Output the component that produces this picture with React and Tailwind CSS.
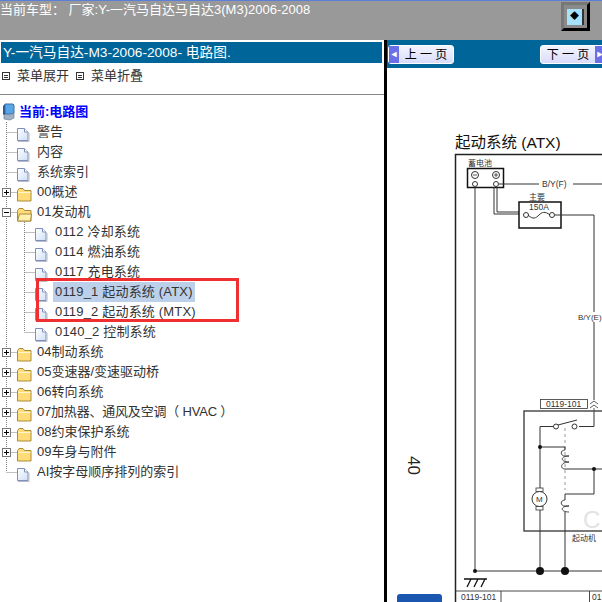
import React from "react";

const FONT = "font-['Liberation_Sans','Noto_Sans_CJK_SC',sans-serif]";

const tree = [
  { label: "警告", type: "doc" },
  { label: "内容", type: "doc" },
  { label: "系统索引", type: "doc" },
  { label: "00概述", type: "folder", box: "plus" },
  { label: "01发动机", type: "open", box: "minus" },
  { label: "0112 冷却系统", type: "doc", sub: true },
  { label: "0114 燃油系统", type: "doc", sub: true },
  { label: "0117 充电系统", type: "doc", sub: true },
  { label: "0119_1 起动系统 (ATX)", type: "doc", sub: true, selected: true },
  { label: "0119_2 起动系统 (MTX)", type: "doc", sub: true },
  { label: "0140_2 控制系统", type: "doc", sub: true, last: true },
  { label: "04制动系统", type: "folder", box: "plus" },
  { label: "05变速器/变速驱动桥", type: "folder", box: "plus" },
  { label: "06转向系统", type: "folder", box: "plus" },
  { label: "07加热器、通风及空调（ HVAC ）", type: "folder", box: "plus", tight: true },
  { label: "08约束保护系统", type: "folder", box: "plus" },
  { label: "09车身与附件", type: "folder", box: "plus" },
  { label: "AI按字母顺序排列的索引", type: "doc", end: true },
];

const Gutter = ({ width = 17, x = 6.5, branch, end, box }) => (
  <svg width={width} height="20" className="shrink-0" stroke="#808080" strokeDasharray="1 1" fill="none">
    <path d={`M${x} 0V${end ? 10 : 20}`} />
    {branch && <path d={`M${x} 10.5H${width}`} />}
    {box && (
      <g strokeDasharray="none">
        <rect x="2.500" y="6.500" width="8" height="8" fill="#fff" stroke="#777" />
        <path d="M4 10.500h5" stroke="#000" />
        {box === "plus" && <path d="M6.500 8v5" stroke="#000" />}
      </g>
    )}
  </svg>
);

const DocIcon = () => (
  <svg width="14" height="20" viewBox="0 0 14 20" className="shrink-0">
    <defs>
      <linearGradient id="docFill" x1="0" y1="0" x2="1" y2="1">
        <stop offset="0" stopColor="#ffffff" />
        <stop offset="1" stopColor="#cfe0f7" />
      </linearGradient>
    </defs>
    <path d="M0.500 6.500h7l3.500 3.500v8.500h-10.500z" fill="url(#docFill)" stroke="#7d90bd" />
    <path d="M7.500 6.500v3.500h3.500" fill="#fff" stroke="#7d90bd" />
    <path d="M1 19.500h11V11" fill="none" stroke="#b9bcc4" />
  </svg>
);

const FolderIcon = ({ open }) => (
  <svg width="16" height="20" viewBox="0 0 16 20" className="shrink-0">
    <path d="M0.500 8.500l1.500-2h4l1.500 2h6.500v10.500h-13.500z" fill="#ffdc78" stroke="#a98c3a" />
    {open ? (
      <path d="M0.500 19l2-7h12l-1 7z" fill="#fff0b0" stroke="#a98c3a" />
    ) : (
      <path d="M1.500 10.500h12" stroke="#fff6cf" />
    )}
  </svg>
);

const TreeRow = ({ item }) => (
  <div className="flex h-5 items-center">
    <Gutter branch={!item.sub} end={item.end} box={item.box} />
    {item.sub && <Gutter width={18} x={7.5} branch end={item.last} />}
    {item.type === "doc" ? <DocIcon /> : <FolderIcon open={item.type === "open"} />}
    <span
      className={`px-[2px] leading-5 whitespace-nowrap text-[13px] text-[#333] ${
        item.selected ? "bg-[#bdd0ea]" : ""
      } ${item.type === "doc" ? "ml-[4px]" : "ml-[2px]"} ${item.sub ? "tracking-[0.18px]" : ""} ${
        item.tight ? "tracking-[-0.2px]" : ""
      }`}
    >
      {item.label}
    </span>
  </div>
);

const MenuGlyph = () => (
  <span className="flex h-[8px] w-[8px] flex-col justify-center gap-px border border-[#333] px-px">
    <span className="h-px bg-[#333]" />
    <span className="h-px bg-[#333]" />
  </span>
);

const PageButton = ({ label, next }) => (
  <div
    className={`flex h-[19px] w-[66px] items-center rounded-[3px] border border-white bg-gradient-to-b from-[#f4f4ff] to-[#d9dcfa] text-[12px] text-black ${
      next ? "flex-row-reverse" : ""
    }`}
  >
    <span className="flex h-full w-[10px] items-center justify-center bg-[#6a6fe8] text-[9px] text-white">
      {next ? "►" : "◄"}
    </span>
    <span className="flex-1 text-center whitespace-pre">{label}</span>
  </div>
);

const Diagram = () => (
  <svg viewBox="387 68 215 534" width="215" height="534" fill="none" className="block" stroke="#333" fontFamily="'Liberation Sans','Noto Sans CJK SC',sans-serif">
    <text x="455" y="148" fontSize="15.500" fill="#111" stroke="none">起动系统 (ATX)</text>
    <text x="0" y="0" fontSize="17" fill="#222" stroke="none" transform="translate(408 456) rotate(90)">40</text>
    <rect x="397" y="594" width="45" height="12" rx="3" fill="#1b56b0" stroke="none" />

    <path d="M455.500 602V154.500H602" stroke="#222" strokeWidth="1.500" />
    <text x="468" y="166" fontSize="8" fill="#333" stroke="none">蓄电池</text>
    <rect x="467.500" y="168.500" width="36" height="19" stroke="#111" strokeWidth="1.500" />
    <circle cx="475" cy="175" r="3.500" />
    <circle cx="496" cy="175" r="3.500" />
    <path d="M473 175h4M494 175h4M496 173v4" strokeWidth="0.800" />
    <circle cx="475" cy="184" r="2.500" fill="#fff" />
    <circle cx="496" cy="184" r="2.500" fill="#fff" />
    <path d="M499 184h40M573 184h29" />
    <text x="542" y="187" fontSize="8.500" fill="#333" stroke="none">B/Y(F)</text>
    <path d="M475 187V571" />
    <path d="M494 187v27h25M497 187v25h22" />
    <rect x="519" y="202" width="42" height="26" stroke="#111" strokeWidth="1.500" />
    <text x="529" y="200" fontSize="8" fill="#333" stroke="none">主要</text>
    <text x="529" y="210" fontSize="8.500" fill="#333" stroke="none">150A</text>
    <circle cx="526" cy="215" r="2.500" />
    <circle cx="552" cy="215" r="2.500" />
    <path d="M528 215c5 5 8 3 11 0s6-4 11 0M555 215h39V312M594 322V400" />
    <text x="578" y="320" fontSize="8" fill="#333" stroke="none">B/Y(E)</text>

    <rect x="540.500" y="399.500" width="47" height="9" strokeWidth="0.800" />
    <text x="546" y="407" fontSize="8.500" fill="#333" stroke="none">0119-101</text>
    <path d="M590 404l4-3 4 3M590 408l4-3 4 3M594 408v4" strokeWidth="0.800" />
    <rect x="524" y="411" width="90" height="120" stroke="#333" strokeWidth="1.300" />
    <path d="M540 571V426.500h14M558 425l19-5M579 426.500h15V412" />
    <circle cx="556" cy="426.500" r="2.500" fill="#fff" />
    <circle cx="574.500" cy="426.500" r="2.500" fill="#fff" />
    <path d="M565 428V490" strokeDasharray="3 3" stroke="#999" />
    <path d="M540 447h25v3M565 469h37M594 469v25h-29v6M565 512v59" />
    <path d="M565 450c-5 0-5 6 0 6h4M569 456c-9 0-9 6 0 6M569 462c-9 0-9 7-4 7" strokeWidth="0.900" />
    <path d="M565 500c-5 0-5 6 0 6h4M569 506c-9 0-9 6 0 6" strokeWidth="0.900" />
    <circle cx="539.500" cy="499" r="7.500" fill="#fff" />
    <rect x="536" y="488" width="7" height="3.500" fill="#fff" strokeWidth="0.800" />
    <rect x="536" y="506.500" width="7" height="3.500" fill="#fff" strokeWidth="0.800" />
    <text x="536" y="502" fontSize="8" fill="#333" stroke="none">M</text>
    <circle cx="540" cy="447" r="2" fill="#111" stroke="none" />
    <circle cx="594" cy="469" r="2" fill="#111" stroke="none" />
    <text x="583" y="528" fontSize="24" fill="#e3e3e3" stroke="none">C</text>
    <text x="572" y="541" fontSize="8" fill="#333" stroke="none">起动机</text>

    <path d="M475 571h127" />
    <circle cx="475" cy="571" r="2" fill="#111" stroke="none" />
    <circle cx="540" cy="571" r="4" fill="#111" stroke="none" />
    <circle cx="565" cy="571" r="4" fill="#111" stroke="none" />
    <path d="M464 579h23M467 587l4-8M474 587l4-8M481 587l4-8" strokeWidth="1.300" stroke="#111" />
    <path d="M455 591h147M501 591v11M589.500 591v11" strokeWidth="0.900" />
    <text x="461" y="599.500" fontSize="8.500" fill="#333" stroke="none">0119-101</text>
    <text x="592" y="599.500" fontSize="8.500" fill="#333" stroke="none">01</text>
  </svg>
);

const App = () => {
  return (
    <div className={`${FONT} relative flex h-[602px] w-[602px] flex-col overflow-hidden bg-white`}>
      <div className="flex h-10 shrink-0 justify-between border-t border-[#5b7fd8] bg-[#999999] pr-3">
        <p className="text-[13px] leading-[17px] whitespace-nowrap text-white">
          当前车型： 厂家:Y-一汽马自达马自达3(M3)2006-2008
        </p>
        <div className="mt-[1px] flex h-[29px] w-[29px] items-center justify-center border-[3px] border-t-[#777] border-r-black border-b-black border-l-[#777] bg-[#8a8a8a]">
          <span className="flex h-[16px] w-[17px] items-center justify-center border-r-2 border-r-[#333] bg-[#a6e3fb] text-[9px] leading-none text-black">
            ◆
          </span>
        </div>
      </div>

      <div className="flex min-h-0 flex-1">
        <div className="w-[384px] shrink-0 pt-[2px]">
          <div className="mr-[2px] ml-[1px] h-[21px] bg-[#006699] pl-[2px] text-[13.700px] leading-[21px] whitespace-nowrap text-white">
            Y-一汽马自达-M3-2006-2008- 电路图.
          </div>
          <div className="flex h-[31px] items-center pb-[5px] pl-[2px] text-[13px] text-[#333]">
            <MenuGlyph />
            <span className="mx-[7px]">菜单展开</span>
            <MenuGlyph />
            <span className="ml-[7px]">菜单折叠</span>
          </div>
          <div className="h-px bg-[#888]" />
          <div className="mt-[7px] flex h-5 items-center gap-[4px] pl-[2px] text-[13px] font-bold text-[#0000ff]">
            <svg width="13" height="18" viewBox="0 0 13 18" className="shrink-0">
              <path d="M3 1h8l1 1v8l-1 1H3z" fill="#58a6e8" stroke="#3d6fa8" />
              <path d="M2 11l6 1 4-2v5l-4 2-6-1z" fill="#9fb4c8" stroke="#5d7288" strokeWidth="0.600" />
              <path d="M1 3l2-2v10l-2 1z" fill="#2c5d92" />
            </svg>
            <span>当前:电路图</span>
          </div>
          {tree.map((item) => (
            <TreeRow key={item.label} item={item} />
          ))}
        </div>

        <div className="w-[3px] shrink-0 bg-black" />

        <div className="min-w-0 flex-1">
          <div className="flex h-7 items-start justify-between overflow-hidden bg-[#006699] pt-[5px] pl-px">
            <PageButton label="上 一 页" />
            <div className="-mr-[4px]">
              <PageButton label="下 一 页" next />
            </div>
          </div>
          <Diagram />
        </div>
      </div>

      <div className="absolute top-[278px] left-[36px] h-[44px] w-[203px] border-[3px] border-[#f03030]" />
    </div>
  );
};

export default App;
